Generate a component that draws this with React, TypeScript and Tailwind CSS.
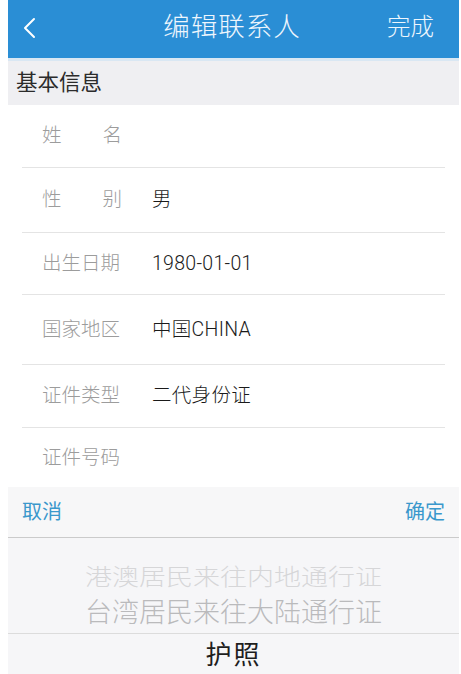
import React from "react"

type Field = {
  label: string
  value?: string
  h: string
  spaced?: boolean
}

const fields: Field[] = [
  { label: "姓名", h: "h-[63px]", spaced: true },
  { label: "性别", value: "男", h: "h-[65px]", spaced: true },
  { label: "出生日期", value: "1980-01-01", h: "h-[62px]" },
  { label: "国家地区", value: "中国CHINA", h: "h-[70px]" },
  { label: "证件类型", value: "二代身份证", h: "h-[63px]" },
  { label: "证件号码", h: "h-[59px]" },
]

const FieldRow = ({ field, last }: { field: Field; last: boolean }) => (
  <div className={`mx-[14px] flex items-center ${field.h} ${last ? "" : "border-b border-[#e4e4e4]"}`}>
    <div
      className={`ml-[20px] w-[80px] text-[19.5px] font-light text-[#9c9c9c] flex ${field.spaced ? "justify-between" : ""}`}
    >
      {field.spaced ? field.label.split("").map((c) => <span key={c}>{c}</span>) : field.label}
    </div>
    {field.value && (
      <div className="ml-[30px] text-[19.5px] tracking-[0.3px] font-light text-[#1a1a1a] font-[Roboto,'Noto_Sans_CJK_SC',sans-serif]">
        {field.value}
      </div>
    )}
  </div>
)

export default function App() {
  return (
    <div
      className="w-[461px] h-[674px] overflow-hidden bg-white pl-2 pr-[2px]"
      style={{ fontFamily: '"Liberation Sans", "Noto Sans CJK SC", sans-serif' }}
    >
      <div className="h-full flex flex-col bg-white">
        {/* header */}
        <div className="h-[61px] shrink-0 bg-[#2a8ed5] border-b-[3px] border-[#d9e7f3] flex items-center px-[17px] text-white">
          <svg width="14" height="22" viewBox="0 0 14 22" className="shrink-0 -mt-[2px] -ml-[2px]">
            <polyline points="11,2 2,11 11,20" fill="none" stroke="white" strokeWidth="2" strokeLinecap="round" strokeLinejoin="round" />
          </svg>
          <div className="flex-1 text-center text-[26.5px] font-light text-[#eef6fd] tracking-[1px] pl-[40px] -mt-[2px]">编辑联系人</div>
          <div className="text-[23.5px] font-light text-[#eef6fd] -mt-[2px] mr-[8px]">完成</div>
        </div>

        {/* section title */}
        <div className="h-[44px] shrink-0 bg-[#efeff2] flex items-center pl-[8px] text-[21.5px] text-[#2b2b2b]">基本信息</div>

        {/* form */}
        <div className="shrink-0 bg-white">
          {fields.map((f, i) => (
            <FieldRow key={f.label} field={f} last={i === fields.length - 1} />
          ))}
        </div>

        {/* picker toolbar */}
        <div className="h-[51px] shrink-0 bg-[#f7f7f8] border-b border-[#cbcbcb] flex items-center justify-between px-[14px] text-[20px] text-[#3a98cc]">
          <span>取消</span>
          <span>确定</span>
        </div>

        {/* picker wheel */}
        <div className="flex-1 bg-[#f6f6f8] flex flex-col">
          <div className="h-[96px] shrink-0 border-b border-[#dcdcdc] flex flex-col items-center justify-end pb-[3px]">
            <div className="text-[27px] font-light leading-[30px] text-[#d6d6d8] scale-y-[0.85]">港澳居民来往内地通行证</div>
            <div className="text-[27px] font-light leading-[34px] text-[#bababc] mt-[4px]">台湾居民来往大陆通行证</div>
          </div>
          <div className="h-[42px] flex items-center justify-center text-[26px] text-[#1e1e1e] tracking-[2px]">护照</div>
        </div>
      </div>
    </div>
  )
}
